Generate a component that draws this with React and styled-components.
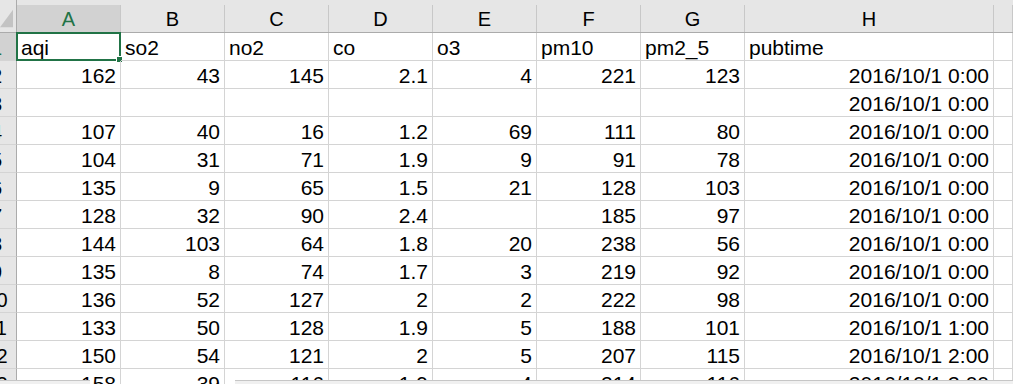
import styled, { createGlobalStyle } from 'styled-components';

const Global = createGlobalStyle`
  html, body {
    margin: 0;
    padding: 0;
    background: #ffffff;
    overflow: hidden;
  }
  body {
    font-family: "Liberation Sans", Arial, sans-serif;
  }
`;

const Window = styled.div`
  position: relative;
  width: 1013px;
  height: 384px;
  overflow: hidden;
`;

const Sheet = styled.div`
  display: grid;
  grid-template-columns: 17px repeat(7, 104px) 249px 1fr;
  grid-template-rows: 33px;
  grid-auto-rows: 28px;
  font-size: 21px;
  color: #000;
`;

const Corner = styled.div`
  background: #e6e6e6;
  border-right: 1px solid #ababab;
  border-bottom: 1px solid #ababab;
  display: flex;
  align-items: flex-end;
  justify-content: flex-end;
  padding: 0 3px 4px 0;
`;

const ColHead = styled.div`
  background: #e6e6e6;
  border-bottom: 1px solid #ababab;
  display: flex;
  align-items: flex-end;
`;

const ColLabel = styled.div`
  flex: 1;
  height: 27px;
  border-right: 1px solid #c8c8c8;
  background: ${(p) => (p.$active ? '#d2d2d2' : 'transparent')};
  color: ${(p) => (p.$active ? '#217346' : '#000')};
  display: flex;
  align-items: center;
  justify-content: center;
  font-size: 20px;
  line-height: 1;
`;

const RowHead = styled.div`
  background: ${(p) => (p.$active ? '#d2d2d2' : '#e6e6e6')};
  border-right: 1px solid #ababab;
  border-bottom: 1px solid #d4d4d4;
  display: flex;
  justify-content: flex-end;
  align-items: flex-end;
  overflow: hidden;
  font-size: 20px;
  line-height: 24px;
`;

const RowNum = styled.span`
  flex: none;
  width: 39px;
  text-align: center;
  color: ${(p) => (p.$active ? '#217346' : '#000')};
`;

const Cell = styled.div`
  position: relative;
  border-right: 1px solid #d4d4d4;
  border-bottom: 1px solid #d4d4d4;
  display: flex;
  align-items: flex-end;
  justify-content: ${(p) => (p.$text ? 'flex-start' : 'flex-end')};
  padding: 0 4px;
  line-height: 24px;
  white-space: nowrap;
  overflow: visible;
`;

const Selection = styled.div`
  position: absolute;
  left: -1px;
  top: -1px;
  right: -1px;
  bottom: -1px;
  border: 2px solid #217346;
  pointer-events: none;
`;

const Handle = styled.div`
  position: absolute;
  right: -4px;
  bottom: -4px;
  width: 5px;
  height: 5px;
  background: #217346;
  border: 1px solid #ffffff;
`;

const BottomBar = styled.div`
  position: absolute;
  bottom: 0;
  height: 3px;
  background: #f0f0f0;
  border-top: 1px solid #c6c6c6;
`;

const columns = ['A', 'B', 'C', 'D', 'E', 'F', 'G', 'H', ''];

const header = ['aqi', 'so2', 'no2', 'co', 'o3', 'pm10', 'pm2_5', 'pubtime'];

const rows = [
  ['162', '43', '145', '2.1', '4', '221', '123', '2016/10/1 0:00'],
  ['', '', '', '', '', '', '', '2016/10/1 0:00'],
  ['107', '40', '16', '1.2', '69', '111', '80', '2016/10/1 0:00'],
  ['104', '31', '71', '1.9', '9', '91', '78', '2016/10/1 0:00'],
  ['135', '9', '65', '1.5', '21', '128', '103', '2016/10/1 0:00'],
  ['128', '32', '90', '2.4', '', '185', '97', '2016/10/1 0:00'],
  ['144', '103', '64', '1.8', '20', '238', '56', '2016/10/1 0:00'],
  ['135', '8', '74', '1.7', '3', '219', '92', '2016/10/1 0:00'],
  ['136', '52', '127', '2', '2', '222', '98', '2016/10/1 0:00'],
  ['133', '50', '128', '1.9', '5', '188', '101', '2016/10/1 1:00'],
  ['150', '54', '121', '2', '5', '207', '115', '2016/10/1 2:00'],
  ['158', '39', '116', '1.9', '4', '214', '116', '2016/10/1 3:00'],
];

const CornerMark = () => (
  <svg width="14" height="19" viewBox="0 0 14 19">
    <polygon points="0,19 14,19 14,0" fill="#c3c3c3" />
  </svg>
);

export default function App() {
  return (
    <Window>
      <Global />
      <Sheet>
        <Corner>
          <CornerMark />
        </Corner>
        {columns.map((c, i) => (
          <ColHead key={i}>
            <ColLabel $active={c === 'A'}>{c}</ColLabel>
          </ColHead>
        ))}

        <RowHead $active>
          <RowNum $active>1</RowNum>
        </RowHead>
        {header.map((h, i) => (
          <Cell key={i} $text>
            {h}
            {i === 0 && (
              <Selection>
                <Handle />
              </Selection>
            )}
          </Cell>
        ))}
        <Cell />

        {rows.map((r, ri) => [
          <RowHead key={`h${ri}`}>
            <RowNum>{ri + 2}</RowNum>
          </RowHead>,
          ...r.map((v, ci) => <Cell key={`${ri}-${ci}`}>{v}</Cell>),
          <Cell key={`${ri}-x`} />,
        ])}
      </Sheet>
      <BottomBar style={{ left: 0, width: 90 }} />
      <BottomBar style={{ left: 235, right: 0 }} />
    </Window>
  );
}
